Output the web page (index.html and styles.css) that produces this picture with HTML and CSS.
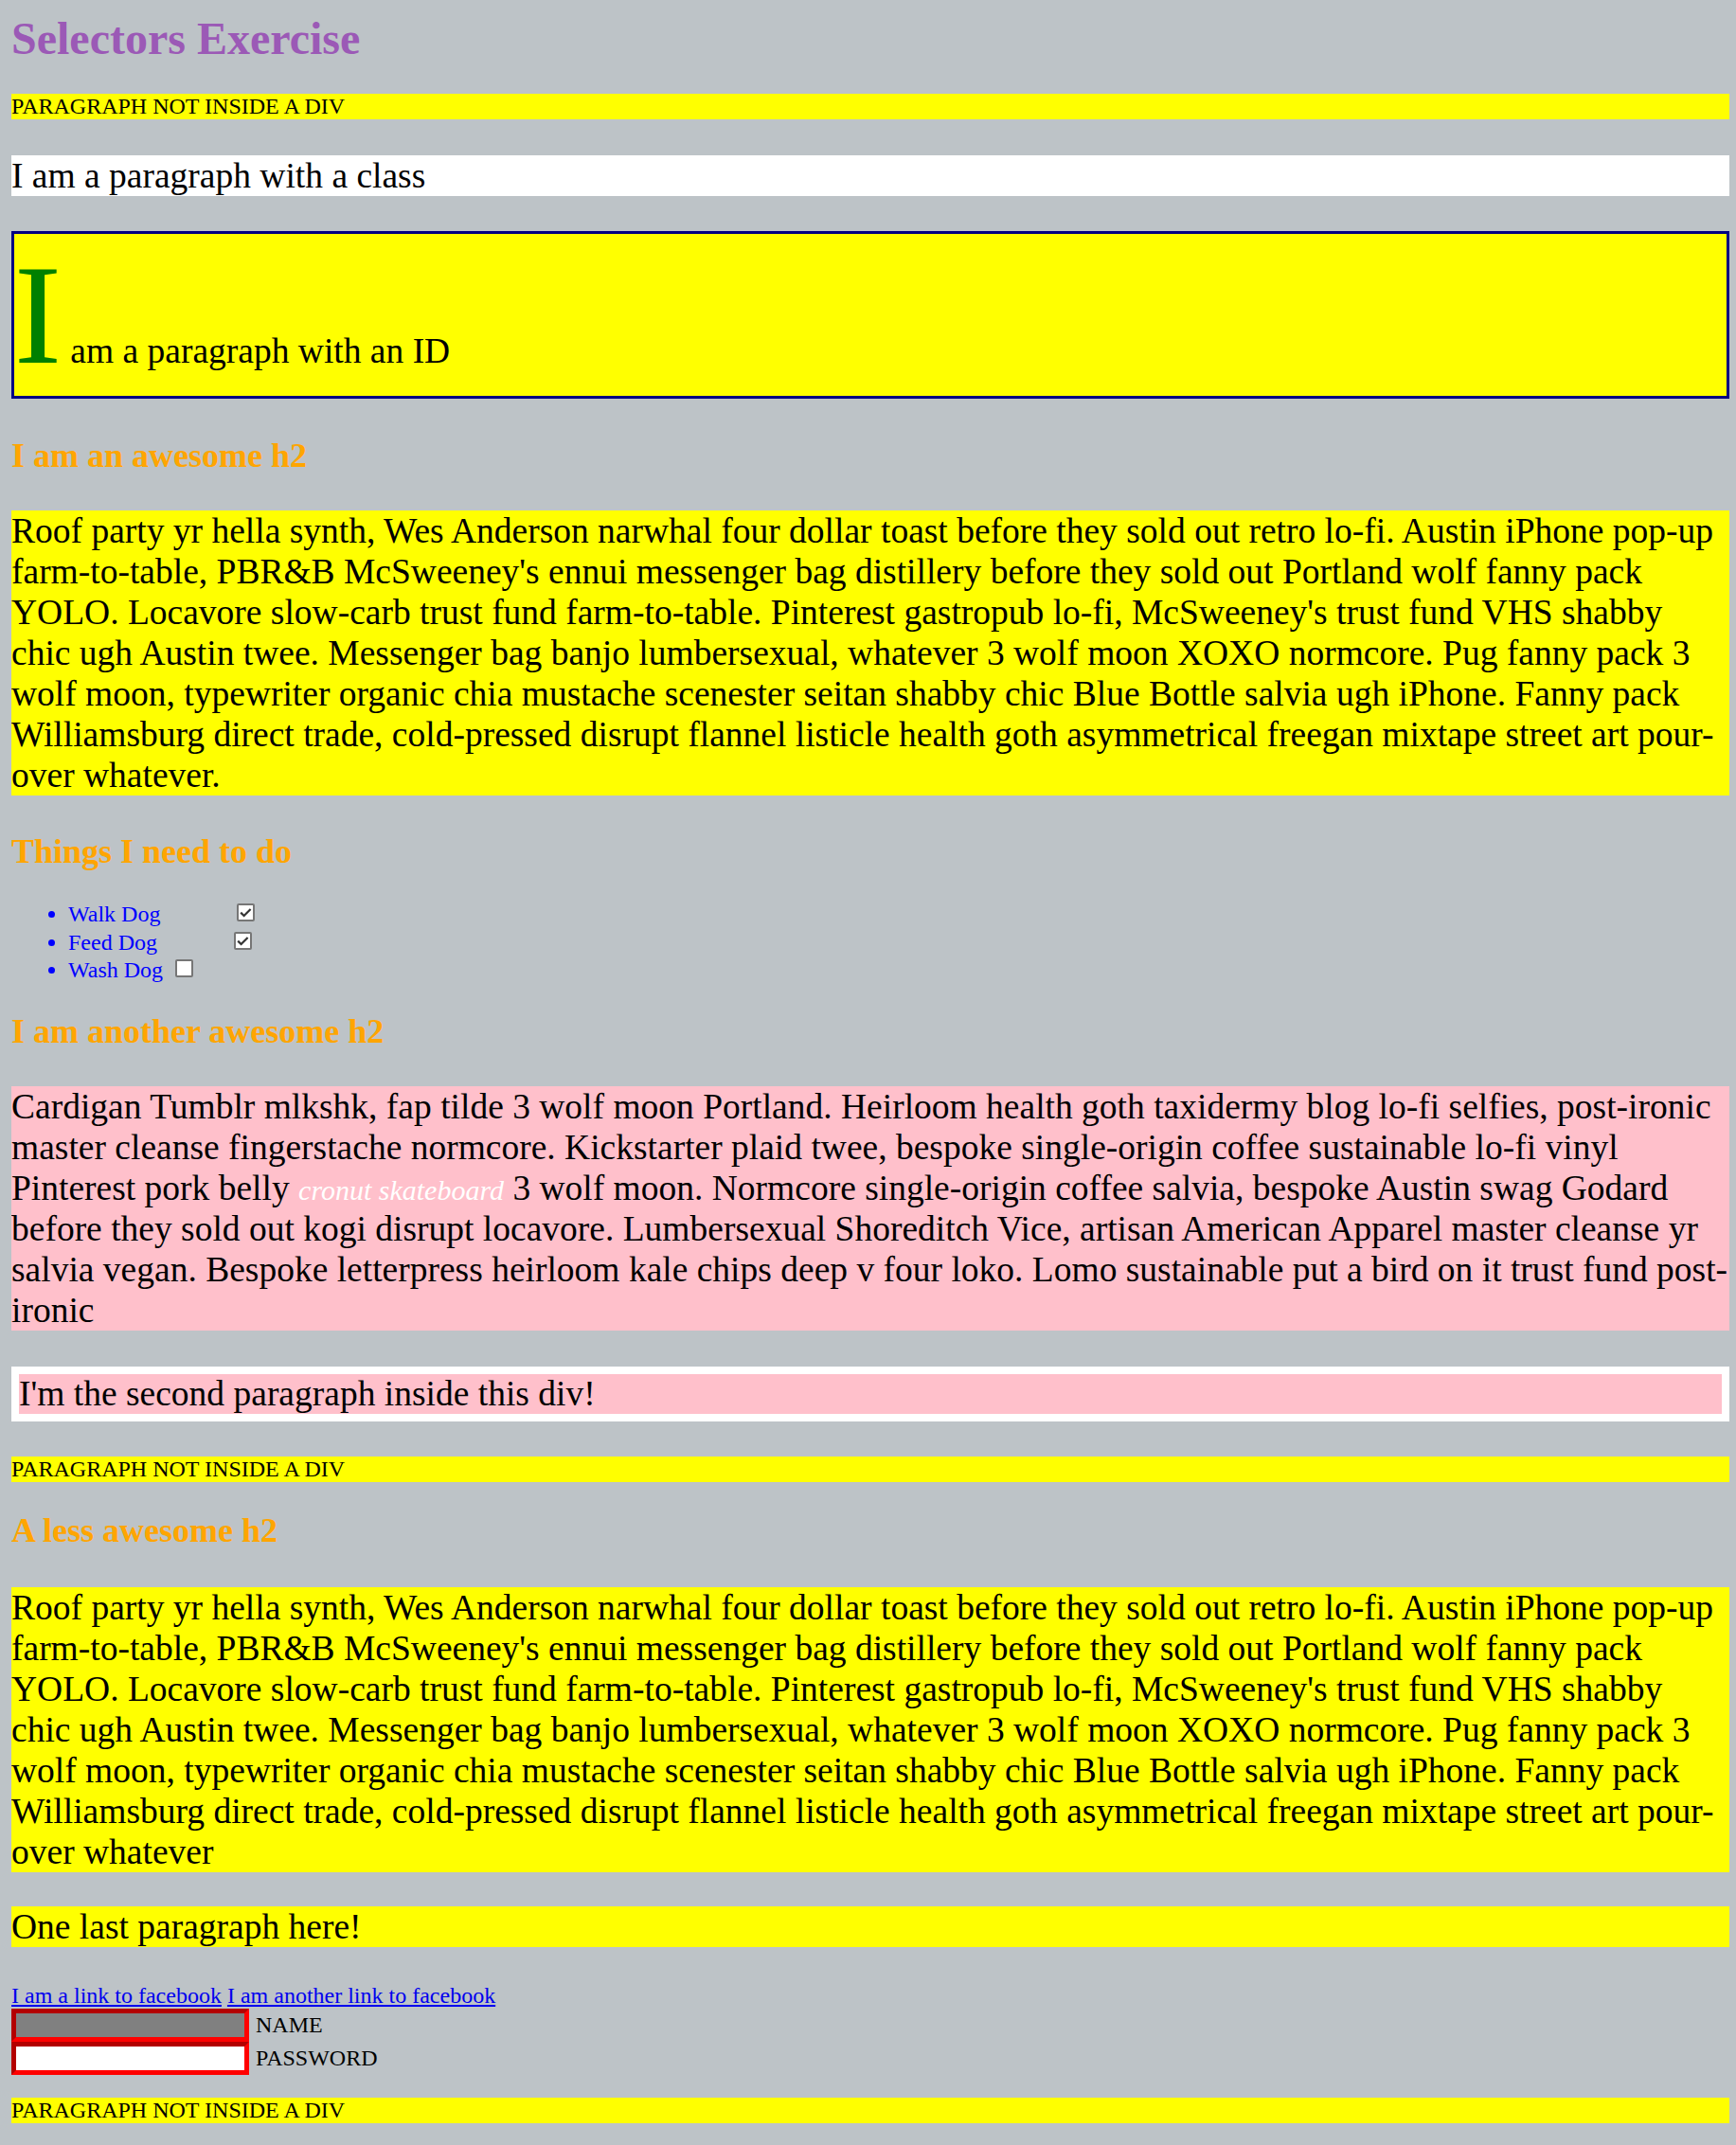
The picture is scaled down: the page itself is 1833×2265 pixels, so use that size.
FILE: index.html
```html
<!DOCTYPE html>
<html lang="en">
<head>
<meta charset="utf-8">
<title>Selectors Exercise</title>
<link rel="stylesheet" href="styles.css">
</head>
<body>
<h1 class="title">Selectors Exercise</h1>
<p class="note note-1">PARAGRAPH NOT INSIDE A DIV</p>
<p class="classy">I am a paragraph with a class</p>
<p class="ided" id="special">I am a paragraph with an ID</p>
<h2 class="sub sub-a">I am an awesome h2</h2>
<p class="lorem lorem-1">Roof party yr hella synth, Wes Anderson narwhal four dollar toast before they sold out retro lo-fi. Austin iPhone pop-up farm-to-table, PBR&amp;B McSweeney's ennui messenger bag distillery before they sold out Portland wolf fanny pack YOLO. Locavore slow-carb trust fund farm-to-table. Pinterest gastropub lo-fi, McSweeney's trust fund VHS shabby chic ugh Austin twee. Messenger bag banjo lumbersexual, whatever 3 wolf moon XOXO normcore. Pug fanny pack 3 wolf moon, typewriter organic chia mustache scenester seitan shabby chic Blue Bottle salvia ugh iPhone. Fanny pack Williamsburg direct trade, cold-pressed disrupt flannel listicle health goth asymmetrical freegan mixtape street art pour-over whatever.</p>
<h2 class="sub sub-b">Things I need to do</h2>
<ul class="todo">
<li>Walk Dog <svg class="box box-on" width="19" height="19" viewBox="0 0 19 19" role="checkbox" aria-checked="true"><rect x="1" y="1" width="17" height="17" rx="1" fill="#fff" stroke="#767676" stroke-width="2"/><polyline points="4.2,9.6 7.6,13 14.6,6" fill="none" stroke="#333" stroke-width="2.2"/></svg></li>
<li>Feed Dog <svg class="box box-on" width="19" height="19" viewBox="0 0 19 19" role="checkbox" aria-checked="true"><rect x="1" y="1" width="17" height="17" rx="1" fill="#fff" stroke="#767676" stroke-width="2"/><polyline points="4.2,9.6 7.6,13 14.6,6" fill="none" stroke="#333" stroke-width="2.2"/></svg></li>
<li>Wash Dog <svg class="box" width="19" height="19" viewBox="0 0 19 19" role="checkbox" aria-checked="false"><rect x="1" y="1" width="17" height="17" rx="1" fill="#fff" stroke="#767676" stroke-width="2"/></svg></li>
</ul>
<h2 class="sub sub-c">I am another awesome h2</h2>
<div class="pinkbox">
<p class="pink">Cardigan Tumblr mlkshk, fap tilde 3 wolf moon Portland. Heirloom health goth taxidermy blog lo-fi selfies, post-ironic master cleanse fingerstache normcore. Kickstarter plaid twee, bespoke single-origin coffee sustainable lo-fi vinyl Pinterest pork belly <span class="cronut">cronut skateboard</span> 3 wolf moon. Normcore single-origin coffee salvia, bespoke Austin swag Godard before they sold out kogi disrupt locavore. Lumbersexual Shoreditch Vice, artisan American Apparel master cleanse yr salvia vegan. Bespoke letterpress heirloom kale chips deep v four loko. Lomo sustainable put a bird on it trust fund post-ironic</p>
<p class="pink second">I'm the second paragraph inside this div!</p>
</div>
<p class="note note-2">PARAGRAPH NOT INSIDE A DIV</p>
<h2 class="sub sub-d">A less awesome h2</h2>
<p class="lorem lorem-2">Roof party yr hella synth, Wes Anderson narwhal four dollar toast before they sold out retro lo-fi. Austin iPhone pop-up farm-to-table, PBR&amp;B McSweeney's ennui messenger bag distillery before they sold out Portland wolf fanny pack YOLO. Locavore slow-carb trust fund farm-to-table. Pinterest gastropub lo-fi, McSweeney's trust fund VHS shabby chic ugh Austin twee. Messenger bag banjo lumbersexual, whatever 3 wolf moon XOXO normcore. Pug fanny pack 3 wolf moon, typewriter organic chia mustache scenester seitan shabby chic Blue Bottle salvia ugh iPhone. Fanny pack Williamsburg direct trade, cold-pressed disrupt flannel listicle health goth asymmetrical freegan mixtape street art pour-over whatever</p>
<p class="last">One last paragraph here!</p>
<div class="links"><a href="#">I am a link to facebook</a> <a href="#">I am another link to facebook</a></div>
<form class="login">
<div class="row"><input class="field field-name" type="text" aria-label="Name"><span class="label">NAME</span></div>
<div class="row"><input class="field field-pass" type="password" aria-label="Password"><span class="label">PASSWORD</span></div>
</form>
<p class="note note-3">PARAGRAPH NOT INSIDE A DIV</p>
</body>
</html>
```
FILE: styles.css
```css
html {
  background: #bdc3c7;
}

body {
  margin: 12px 7px 23px 12px;
  background: #bdc3c7;
  font-family: "Liberation Serif", "Times New Roman", serif;
  font-size: 24px;
  color: #000;
}

p, h1, h2, ul {
  margin: 0;
}

.title {
  font-size: 48px;
  line-height: 57px;
  font-weight: bold;
  color: #9b59b6;
}

.note {
  background: #ffff00;
  font-size: 24px;
  line-height: 27px;
}

.note-1 { margin-top: 30px; }
.note-2 { margin-top: 37px; }
.note-3 { margin-top: 24px; }

.classy {
  margin-top: 38px;
  background: #fff;
  font-size: 37.5px;
  line-height: 43px;
}

.ided {
  margin-top: 37px;
  background: #ffff00;
  border: 3px solid #000080;
  font-size: 37.5px;
  line-height: 43px;
}

.ided::first-letter {
  font-size: 150px;
  line-height: 171px;
  color: #008000;
}

.sub {
  font-size: 36px;
  line-height: 43px;
  font-weight: bold;
  color: #ffa500;
}

.sub-a { margin-top: 39px; }
.sub-b { margin-top: 38px; }
.sub-c { margin-top: 28.5px; }
.sub-d { margin-top: 30px; }

.lorem {
  background: #ffff00;
  font-size: 37.5px;
  line-height: 43px;
}

.lorem-1 { margin-top: 36px; }
.lorem-2 { margin-top: 38px; }

.todo {
  margin-top: 30px;
  padding-left: 60px;
  color: #0000ff;
  font-size: 24px;
  line-height: 29.5px;
}

.box {
  display: inline;
  vertical-align: baseline;
  margin-left: 7px;
}

.box-on {
  margin-left: 75px;
}

.pink {
  background: #ffc0cb;
  font-size: 37.5px;
  line-height: 43px;
  margin-top: 36px;
}

.cronut {
  color: #fff;
  font-style: italic;
  font-size: 30px;
  line-height: 1;
}

.second {
  margin-top: 38px;
  border: 8px solid #fff;
  line-height: 42px;
}

.last {
  margin-top: 36px;
  background: #ffff00;
  font-size: 37.5px;
  line-height: 43px;
}

.links {
  margin-top: 37px;
  line-height: 28px;
}

.links a {
  color: #0000ee;
  text-decoration: underline;
}

.login {
  margin: 0;
}

.row {
  display: flex;
  align-items: center;
  gap: 7px;
  height: 35px;
}

.field {
  box-sizing: border-box;
  width: 251px;
  height: 35px;
  margin: 0;
  padding: 1px 3px;
  border-width: 5px;
  border-style: solid;
  border-color: #b30000 #ff0000 #ff0000 #b30000;
  font-family: inherit;
  font-size: 20px;
}

.field-name {
  background: #808080;
}

.field-pass {
  background: #fff;
}

.label {
  font-size: 24px;
  line-height: 28px;
  padding-bottom: 2px;
}
```
